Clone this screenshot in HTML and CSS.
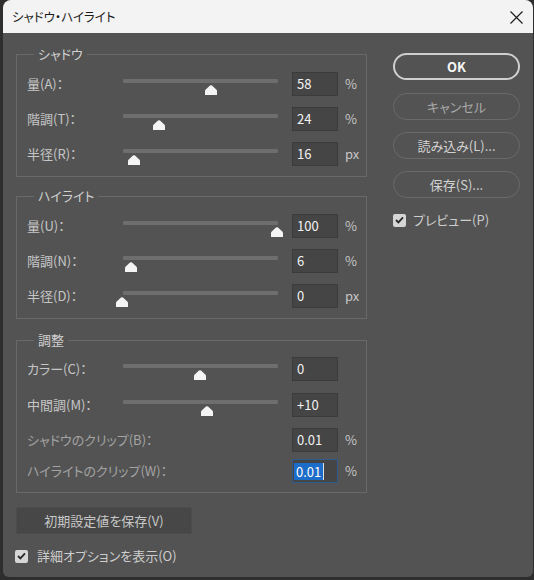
FILE: index.html
```html
<!DOCTYPE html>
<html lang="ja">
<head>
<meta charset="utf-8">
<link rel="stylesheet" href="styles.css">
</head>
<body>
<div class="window">
  <div class="titlebar">
    <span class="title">シャドウ・ハイライト</span>
    <svg class="close" width="13" height="13" viewBox="0 0 13 13"><path d="M0.5 0.5 L12.5 12.5 M12.5 0.5 L0.5 12.5" stroke="#1c1c1c" stroke-width="1.2" fill="none"/></svg>
  </div>
  <div class="content">
    <div class="left">
      <fieldset class="group g1">
        <legend>シャドウ</legend>
        <div class="row">
          <span class="label">量(A)：</span>
          <div class="slider"><div class="track"></div><svg class="thumb" style="left:82px" width="12" height="10" viewBox="0 0 12 10"><path d="M0 10 L0 6 Q0 5 1 4.2 L5 0.6 Q6 -0.1 7 0.6 L11 4.2 Q12 5 12 6 L12 10 Z" fill="#f4f4f4"/></svg></div>
          <span class="field">58</span><span class="unit">%</span>
        </div>
        <div class="row">
          <span class="label">階調(T)：</span>
          <div class="slider"><div class="track"></div><svg class="thumb" style="left:30px" width="12" height="10" viewBox="0 0 12 10"><path d="M0 10 L0 6 Q0 5 1 4.2 L5 0.6 Q6 -0.1 7 0.6 L11 4.2 Q12 5 12 6 L12 10 Z" fill="#f4f4f4"/></svg></div>
          <span class="field">24</span><span class="unit">%</span>
        </div>
        <div class="row">
          <span class="label">半径(R)：</span>
          <div class="slider"><div class="track"></div><svg class="thumb" style="left:5px" width="12" height="10" viewBox="0 0 12 10"><path d="M0 10 L0 6 Q0 5 1 4.2 L5 0.6 Q6 -0.1 7 0.6 L11 4.2 Q12 5 12 6 L12 10 Z" fill="#f4f4f4"/></svg></div>
          <span class="field">16</span><span class="unit">px</span>
        </div>
      </fieldset>
      <fieldset class="group g2">
        <legend>ハイライト</legend>
        <div class="row">
          <span class="label">量(U)：</span>
          <div class="slider"><div class="track"></div><svg class="thumb" style="left:148px" width="12" height="10" viewBox="0 0 12 10"><path d="M0 10 L0 6 Q0 5 1 4.2 L5 0.6 Q6 -0.1 7 0.6 L11 4.2 Q12 5 12 6 L12 10 Z" fill="#f4f4f4"/></svg></div>
          <span class="field">100</span><span class="unit">%</span>
        </div>
        <div class="row">
          <span class="label">階調(N)：</span>
          <div class="slider"><div class="track"></div><svg class="thumb" style="left:2px" width="12" height="10" viewBox="0 0 12 10"><path d="M0 10 L0 6 Q0 5 1 4.2 L5 0.6 Q6 -0.1 7 0.6 L11 4.2 Q12 5 12 6 L12 10 Z" fill="#f4f4f4"/></svg></div>
          <span class="field">6</span><span class="unit">%</span>
        </div>
        <div class="row">
          <span class="label">半径(D)：</span>
          <div class="slider"><div class="track"></div><svg class="thumb" style="left:-7px" width="12" height="10" viewBox="0 0 12 10"><path d="M0 10 L0 6 Q0 5 1 4.2 L5 0.6 Q6 -0.1 7 0.6 L11 4.2 Q12 5 12 6 L12 10 Z" fill="#f4f4f4"/></svg></div>
          <span class="field">0</span><span class="unit">px</span>
        </div>
      </fieldset>
      <fieldset class="group g3">
        <legend>調整</legend>
        <div class="row">
          <span class="label">カラー(C)：</span>
          <div class="slider"><div class="track"></div><svg class="thumb" style="left:71px" width="12" height="10" viewBox="0 0 12 10"><path d="M0 10 L0 6 Q0 5 1 4.2 L5 0.6 Q6 -0.1 7 0.6 L11 4.2 Q12 5 12 6 L12 10 Z" fill="#f4f4f4"/></svg></div>
          <span class="field">0</span>
        </div>
        <div class="row r-mid">
          <span class="label">中間調(M)：</span>
          <div class="slider"><div class="track"></div><svg class="thumb" style="left:78px" width="12" height="10" viewBox="0 0 12 10"><path d="M0 10 L0 6 Q0 5 1 4.2 L5 0.6 Q6 -0.1 7 0.6 L11 4.2 Q12 5 12 6 L12 10 Z" fill="#f4f4f4"/></svg></div>
          <span class="field">+10</span>
        </div>
        <div class="row r-clip1">
          <span class="label wide dim">シャドウのクリップ(B)：</span>
          <span class="field">0.01</span><span class="unit">%</span>
        </div>
        <div class="row r-clip2">
          <span class="label wide dim">ハイライトのクリップ(W)：</span>
          <span class="field active"><span class="sel">0.01</span><span class="caret"></span></span><span class="unit">%</span>
        </div>
      </fieldset>
      <div class="save-default">初期設定値を保存(V)</div>
      <div class="check-row detail">
        <span class="checkbox"><svg width="9" height="8" viewBox="0 0 9 8"><path d="M1 4 L3.4 6.4 L8 1.4" stroke="#2a2a2a" stroke-width="1.8" fill="none"/></svg></span>
        <span class="check-label">詳細オプションを表示(O)</span>
      </div>
    </div>
    <div class="right">
      <div class="btn ok">OK</div>
      <div class="btn cancel">キャンセル</div>
      <div class="btn">読み込み(L)...</div>
      <div class="btn">保存(S)...</div>
      <div class="check-row preview">
        <span class="checkbox"><svg width="9" height="8" viewBox="0 0 9 8"><path d="M1 4 L3.4 6.4 L8 1.4" stroke="#2a2a2a" stroke-width="1.8" fill="none"/></svg></span>
        <span class="check-label">プレビュー(P)</span>
      </div>
    </div>
  </div>
</div>
</body>
</html>
```
FILE: styles.css
```css
* { box-sizing: border-box; }
html, body { margin: 0; padding: 0; }
body {
  background: #2e2e2e;
  width: 534px;
  height: 580px;
  overflow: hidden;
  font-family: "Noto Sans CJK JP", "Noto Sans", sans-serif;
  font-feature-settings: "palt";
  font-size: 13px;
}
.window {
  margin-left: 3px;
  width: 530px;
  height: 577px;
  background: #535353;
  border-radius: 8px 8px 6px 6px;
  overflow: hidden;
}
.titlebar {
  height: 33px;
  background: #f3f3f3;
  display: flex;
  align-items: center;
  justify-content: space-between;
  padding: 0 10px 0 9px;
}
.title {
  color: #1b1b1b;
  font-size: 12.5px;
  line-height: 16px;
}
.close { display: block; margin-top: 1px; }
.content {
  display: flex;
  align-items: flex-start;
}
.left {
  padding-left: 13px;
  padding-top: 12px;
  width: 364px;
}
.group {
  margin: 0;
  border: 1px solid #696969;
  padding: 9px 0 10px 10px;
  min-width: 0;
  width: 351px;
}
.group legend {
  padding: 0 4px;
  margin-left: 7px;
  color: #cfcfcf;
  line-height: 18px;
  font-size: 13px;
}
.g2 { margin-top: 10px; }
.g3 { margin-top: 12px; padding-top: 8px; padding-bottom: 9px; }
.row {
  display: flex;
  align-items: center;
  height: 24px;
  margin-top: 11px;
}
.row:first-of-type { margin-top: 0; }
.g2 .row { margin-top: 11px; }
.g2 .row:first-of-type { margin-top: 0; }
.g3 .r-mid { margin-top: 12px; }
.g3 .r-clip1 { margin-top: 11px; }
.g3 .r-clip2 { margin-top: 7px; }
.label {
  width: 96px;
  color: #c6c6c6;
  line-height: 16px;
  white-space: nowrap;
}
.label.wide { width: 251px; }
.label.dim { color: #a3a3a3; }
.slider {
  position: relative;
  width: 155px;
  height: 24px;
}
.track {
  margin-top: 7px;
  height: 4px;
  background: #6e6e6e;
  border-radius: 1px;
}
.thumb {
  position: absolute;
  top: 13px;
  display: block;
}
.field {
  margin-left: 14px;
  width: 46px;
  height: 24px;
  background: #454545;
  border: 1px solid #3b3b3b;
  color: #f2f2f2;
  padding-left: 4px;
  line-height: 22px;
  display: flex;
  align-items: center;
}
.field.active {
  border-color: #2f5a8e;
  padding-left: 1px;
}
.sel {
  background: #1c6cc9;
  color: #ffffff;
  line-height: 17px;
  padding: 0 2px;
}
.caret {
  width: 1px;
  height: 17px;
  background: #e0e0e0;
}
.unit {
  margin-left: 7px;
  color: #c6c6c6;
  line-height: 16px;
}
.save-default {
  margin-top: 14px;
  width: 176px;
  height: 27px;
  background: #474747;
  border: 1px solid #4c4c4c;
  border-radius: 2px;
  color: #c8c8c8;
  display: flex;
  align-items: center;
  justify-content: center;
}
.check-row {
  display: flex;
  align-items: center;
}
.detail { margin-top: 14px; margin-left: -1px; }
.checkbox {
  width: 13px;
  height: 13px;
  background: #d6d6d6;
  border-radius: 2px;
  display: flex;
  align-items: center;
  justify-content: center;
}
.checkbox svg { display: block; }
.check-label {
  margin-left: 9px;
  color: #cdcdcd;
  line-height: 16px;
}
.right {
  margin-left: 26px;
  padding-top: 20px;
  width: 127px;
  display: flex;
  flex-direction: column;
}
.btn {
  height: 27px;
  border: 1.5px solid #6a6a6a;
  border-radius: 14px;
  color: #d2d2d2;
  display: flex;
  align-items: center;
  justify-content: center;
  margin-bottom: 12px;
}
.btn.ok {
  border: 2px solid #cfcfcf;
  color: #f6f6f6;
  font-weight: 700;
}
.btn.cancel { color: #a8a8a8; margin-top: 1px; }
.preview { margin-top: 2px; }
.preview .check-label { margin-left: 7px; }
```
